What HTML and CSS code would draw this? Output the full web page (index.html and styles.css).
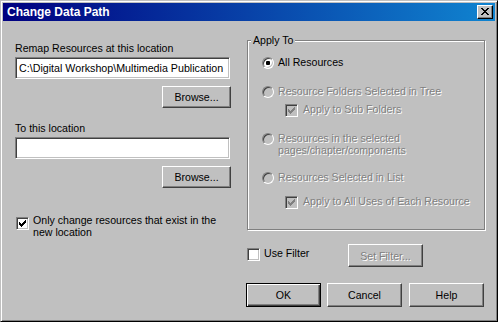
FILE: index.html
```html
<!DOCTYPE html>
<html>
<head>
<meta charset="utf-8">
<title>Change Data Path</title>
<link rel="stylesheet" href="styles.css">
</head>
<body>
<div class="window">
  <div class="titlebar">
    <span class="title">Change Data Path</span>
    <span class="close">
      <svg width="8" height="7" viewBox="0 0 8 7" shape-rendering="crispEdges"><path fill="#000" d="M0 0h2v1H0z M6 0h2v1H6z M1 1h2v1H1z M5 1h2v1H5z M2 2h4v1H2z M3 3h2v1H3z M2 4h4v1H2z M1 5h2v1H1z M5 5h2v1H5z M0 6h2v1H0z M6 6h2v1H6z"/></svg>
    </span>
  </div>
  <div class="content">
    <div class="left">
      <div class="label first">Remap Resources at this location</div>
      <div class="edit">C:\Digital Workshop\Multimedia Publication</div>
      <button class="btn browse">Browse...</button>
      <div class="label second">To this location</div>
      <div class="edit"></div>
      <button class="btn browse">Browse...</button>
      <div class="opt only">
        <span class="checkbox">
          <svg width="7" height="7" viewBox="0 0 7 7" shape-rendering="crispEdges"><path fill="#000" d="M6 0h1v1H6z M5 1h2v1H5z M0 2h1v1H0z M4 2h3v1H4z M0 3h2v1H0z M3 3h3v1H3z M0 4h5v1H0z M1 5h3v1H1z M2 6h1v1H2z"/></svg>
        </span>
        <span class="text multi">Only change resources that exist in the<br>new location</span>
      </div>
    </div>
    <div class="right">
      <div class="group">
        <div class="legend">Apply To</div>
        <div class="opt r1">
          <span class="radio"><span class="dot"></span></span>
          <span class="text">All Resources</span>
        </div>
        <div class="opt r2">
          <span class="radio disabled"></span>
          <span class="text dis">Resource Folders Selected in Tree</span>
        </div>
        <div class="opt sub c1">
          <span class="checkbox disabled">
            <svg width="7" height="7" viewBox="0 0 7 7" shape-rendering="crispEdges"><path fill="#808080" d="M6 0h1v1H6z M5 1h2v1H5z M0 2h1v1H0z M4 2h3v1H4z M0 3h2v1H0z M3 3h3v1H3z M0 4h5v1H0z M1 5h3v1H1z M2 6h1v1H2z"/></svg>
          </span>
          <span class="text dis">Apply to Sub Folders</span>
        </div>
        <div class="opt r3">
          <span class="radio disabled"></span>
          <span class="text dis multi">Resources in the selected<br>pages/chapter/components</span>
        </div>
        <div class="opt r4">
          <span class="radio disabled"></span>
          <span class="text dis">Resources Selected in List</span>
        </div>
        <div class="opt sub c2">
          <span class="checkbox disabled">
            <svg width="7" height="7" viewBox="0 0 7 7" shape-rendering="crispEdges"><path fill="#808080" d="M6 0h1v1H6z M5 1h2v1H5z M0 2h1v1H0z M4 2h3v1H4z M0 3h2v1H0z M3 3h3v1H3z M0 4h5v1H0z M1 5h3v1H1z M2 6h1v1H2z"/></svg>
          </span>
          <span class="text dis">Apply to All Uses of Each Resource</span>
        </div>
      </div>
      <div class="filter-row">
        <div class="opt filter">
          <span class="checkbox"></span>
          <span class="text">Use Filter</span>
        </div>
        <button class="btn setfilter" disabled><span class="dis">Set Filter...</span></button>
      </div>
      <div class="button-row">
        <button class="btn action default">OK</button>
        <button class="btn action cancel">Cancel</button>
        <button class="btn action help">Help</button>
      </div>
    </div>
  </div>
</div>
</body>
</html>
```

FILE: styles.css
```css
html, body {
  margin: 0;
  padding: 0;
  background: #c0c0c0;
}

body {
  font-family: "Liberation Sans", Arial, sans-serif;
  font-size: 10.6px;
  color: #000;
}

.window {
  width: 498px;
  height: 322px;
  box-sizing: border-box;
  background: #c0c0c0;
  border: 1px solid;
  border-color: #c0c0c0 #000 #000 #c0c0c0;
  box-shadow: inset 1px 1px 0 #fff, inset -1px -1px 0 #808080;
  padding: 2px;
  display: flex;
  flex-direction: column;
}

.titlebar {
  height: 18px;
  flex: 0 0 18px;
  background: linear-gradient(to right, #000080, #1084d0);
  display: flex;
  align-items: center;
  justify-content: space-between;
  padding: 0 2px 0 4px;
}

.title {
  color: #fff;
  font-weight: bold;
  font-size: 12px;
  line-height: 18px;
}

.close {
  width: 16px;
  height: 14px;
  box-sizing: border-box;
  background: #c0c0c0;
  border: 1px solid;
  border-color: #fff #000 #000 #fff;
  box-shadow: inset -1px -1px 0 #808080;
  display: flex;
  align-items: center;
  justify-content: center;
  padding: 0 1px 1px 0;
}

.close svg {
  display: block;
}

.content {
  display: flex;
  padding: 19px 0 0 12px;
}

.left {
  width: 216px;
  display: flex;
  flex-direction: column;
}

.label {
  line-height: 13px;
}

.label.first {
  margin-top: 2px;
}

.label.second {
  margin-top: 14px;
}

.edit {
  width: 215px;
  height: 22px;
  box-sizing: border-box;
  margin-top: 2px;
  background: #fff;
  border: 1px solid;
  border-color: #808080 #fff #fff #808080;
  box-shadow: inset 1px 1px 0 #404040, inset -1px -1px 0 #c0c0c0;
  padding: 0 3px;
  display: flex;
  align-items: center;
  white-space: nowrap;
  overflow: hidden;
  font-size: 10.7px;
}

.btn {
  font-family: inherit;
  font-size: 10.6px;
  color: #000;
  background: #c0c0c0;
  border: 1px solid;
  border-color: #fff #404040 #404040 #fff;
  box-shadow: inset -1px -1px 0 #808080;
  border-radius: 0;
  padding: 0;
  margin: 0;
  box-sizing: border-box;
  text-align: center;
}

.browse {
  align-self: flex-end;
  width: 69px;
  height: 22px;
  margin-top: 7px;
}

.opt {
  display: flex;
  align-items: flex-start;
}

.opt .text {
  line-height: 13px;
  margin-left: 4px;
  white-space: nowrap;
}

.opt .text.multi {
  line-height: 12px;
}

.only {
  margin-top: 26px;
  margin-left: 1px;
}

.only .checkbox {
  margin-top: 3px;
}

.checkbox {
  flex: 0 0 13px;
  width: 13px;
  height: 13px;
  box-sizing: border-box;
  margin-top: 1px;
  background: #fff;
  border: 1px solid;
  border-color: #808080 #fff #fff #808080;
  box-shadow: inset 1px 1px 0 #404040, inset -1px -1px 0 #c0c0c0;
  padding: 2px 0 0 2px;
}

.checkbox svg {
  display: block;
}

.checkbox.disabled {
  background: #c0c0c0;
}

.radio {
  flex: 0 0 12px;
  width: 12px;
  height: 12px;
  box-sizing: border-box;
  margin-top: 1px;
  border-radius: 50%;
  background: #fff;
  border: 1px solid;
  border-color: #808080 #fff #fff #808080;
  box-shadow: inset 1px 1px 0 #404040, inset -1px -1px 0 #c0c0c0;
  display: flex;
  align-items: center;
  justify-content: center;
}

.radio.disabled {
  background: #c0c0c0;
}

.dot {
  width: 4px;
  height: 4px;
  background: #000;
  border-radius: 1px;
}

.dis {
  color: #808080;
  text-shadow: 1px 1px 0 #fff;
}

.right {
  width: 238px;
  margin-left: 16px;
  display: flex;
  flex-direction: column;
}

.group {
  height: 190px;
  box-sizing: border-box;
  border: 1px solid #808080;
  box-shadow: inset 1px 1px 0 #fff, 1px 1px 0 #fff;
  display: flex;
  flex-direction: column;
}

.legend {
  align-self: flex-start;
  margin: -7px 0 0 3px;
  padding: 0 2px;
  line-height: 13px;
  background: #c0c0c0;
}

.group .opt {
  margin-left: 14px;
}

.group .opt.sub {
  margin-left: 37px;
}

.group .opt.sub .text {
  margin-left: 5px;
}

.r1 { margin-top: 9px; }
.r2 { margin-top: 16px; }
.c1 { margin-top: 5px; }
.r3 { margin-top: 15px; }
.r4 { margin-top: 15px; }
.c2 { margin-top: 11px; }

.filter-row {
  display: flex;
  align-items: flex-start;
  margin-top: 14px;
}

.filter {
  flex: 0 0 101px;
  margin-top: 3px;
}

.setfilter {
  width: 75px;
  height: 23px;
}

.button-row {
  display: flex;
  margin-top: 16px;
  margin-left: -1px;
}

.action {
  width: 75px;
  height: 24px;
}

.action.default {
  border: 1px solid #000;
  box-shadow: inset 1px 1px 0 #fff, inset -1px -1px 0 #404040, inset -2px -2px 0 #808080;
}

.cancel {
  margin-left: 6px;
}

.help {
  margin-left: 7px;
}
```
